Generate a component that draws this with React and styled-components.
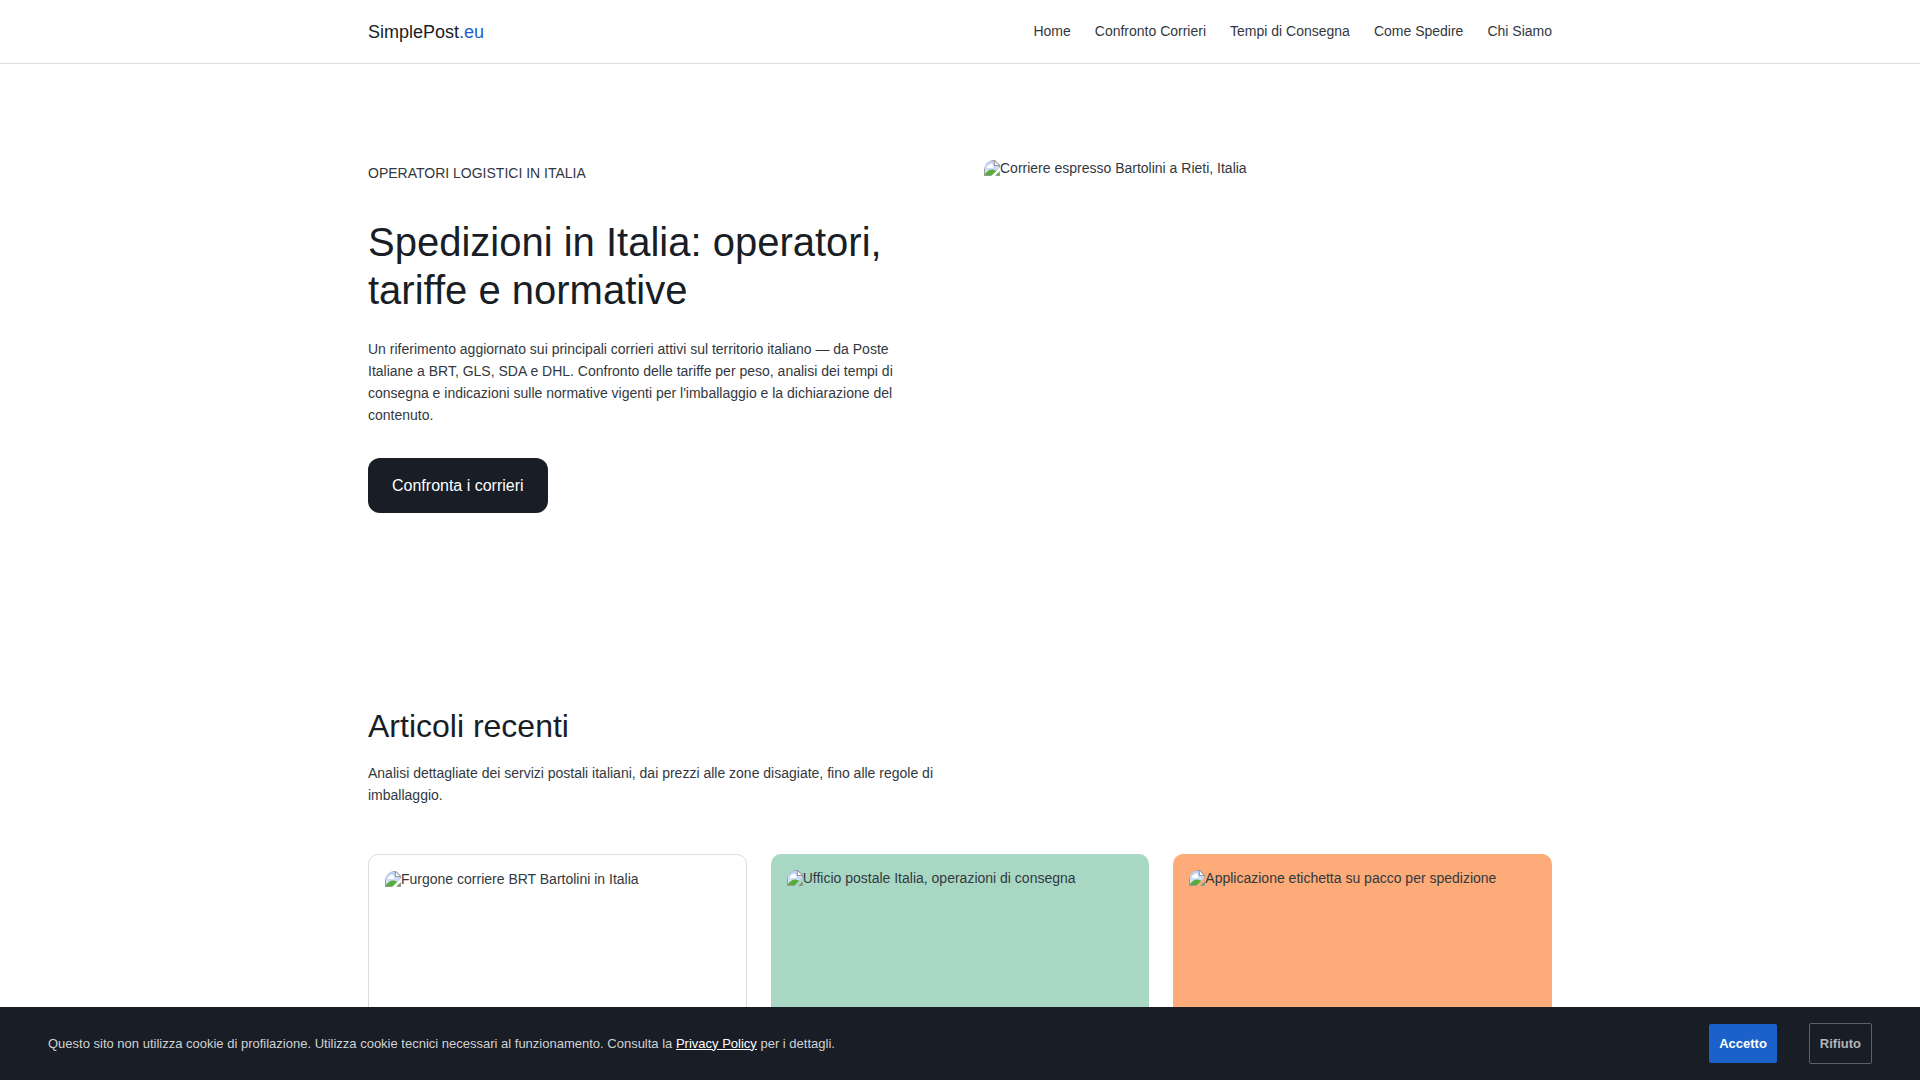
import React, { useId } from 'react';
import styled, { createGlobalStyle } from 'styled-components';

const ink = '#181d26';
const hairline = '#dddddd';
const blue = '#1b61c9';

const GlobalStyle = createGlobalStyle`
  *, *::before, *::after { box-sizing: border-box; }
  body {
    margin: 0;
    background: #ffffff;
    color: #333840;
    font-family: "Liberation Sans", Arial, sans-serif;
    font-size: 14px;
    line-height: 22px;
  }
  h1, h2, p { margin: 0; font-weight: 400; }
  a { color: inherit; text-decoration: none; }
`;

const Container = styled.div`
  width: 100%;
  max-width: 1232px;
  margin: 0 auto;
  padding: 0 24px;
`;

const Header = styled.header`
  border-bottom: 1px solid ${hairline};
`;

const HeaderRow = styled(Container)`
  display: flex;
  align-items: flex-start;
  justify-content: space-between;
  padding-top: 16px;
  padding-bottom: 15px;
`;

const Logo = styled.a`
  font-size: 18px;
  line-height: 32px;
  color: ${ink};
`;

const LogoSuffix = styled.span`
  color: ${blue};
`;

const Nav = styled.nav`
  display: flex;
  gap: 24px;
  line-height: 30px;
`;

const HeroGrid = styled(Container)`
  display: grid;
  grid-template-columns: 1fr 1fr;
  gap: 48px;
  padding-top: 96px;
  padding-bottom: 96px;
`;

const HeroText = styled.div`
  display: flex;
  flex-direction: column;
  align-items: flex-start;
`;

const Eyebrow = styled.p`
  line-height: 26px;
  text-transform: uppercase;
`;

const Title = styled.h1`
  margin: 32px 0 24px;
  font-size: 40px;
  line-height: 48px;
  color: ${ink};
`;

const ButtonLink = styled.a`
  margin-top: 32px;
  padding: 16px 24px;
  border-radius: 12px;
  background: ${ink};
  color: #ffffff;
  font-size: 16px;
  line-height: 23px;
`;

const Figure = styled.div`
  height: ${(p) => p.$height};
  border-radius: 10px;
  overflow: hidden;
  display: flex;
  line-height: 16px;
`;

const Articles = styled(Container)`
  padding-top: 96px;
  padding-bottom: 96px;
`;

const SectionTitle = styled.h2`
  font-size: 32px;
  line-height: 40px;
  color: ${ink};
`;

const Lead = styled.p`
  max-width: 600px;
  margin: 16px 0 48px;
`;

const CardGrid = styled.div`
  display: grid;
  grid-template-columns: repeat(3, 1fr);
  gap: 24px;
`;

const Card = styled.article`
  padding: 16px;
  border: ${(p) => (p.$fill ? 'none' : `1px solid ${hairline}`)};
  border-radius: 10px;
  background: ${(p) => p.$fill || 'transparent'};
`;

const CookieBar = styled.aside`
  position: fixed;
  left: 0;
  right: 0;
  bottom: 0;
  display: flex;
  align-items: center;
  justify-content: space-between;
  padding: 16px 48px;
  background: ${ink};
  color: #d1d2d4;
  font-size: 13px;
`;

const PolicyLink = styled.a`
  color: #ffffff;
  text-decoration: underline;
`;

const Actions = styled.div`
  display: flex;
  align-items: center;
  gap: 32px;
`;

const Action = styled.button`
  padding: 12px 10px;
  border: ${(p) => (p.$outline ? '1px solid #5d6168' : 'none')};
  border-radius: 2px;
  background: ${(p) => (p.$outline ? 'transparent' : blue)};
  color: ${(p) => (p.$outline ? '#b3b4b7' : '#ffffff')};
  font: bold 13px/15px "Liberation Sans", Arial, sans-serif;
  cursor: pointer;
`;

const Icon = styled.svg`
  flex: none;
  width: 16px;
  height: 16px;
`;

function BrokenImage() {
  const id = useId();
  return (
    <Icon viewBox="0 0 16 16" aria-hidden="true">
      <defs>
        <linearGradient id={`${id}sky`} x1="0" y1="0" x2="0" y2="1">
          <stop offset="0" stopColor="#b9cdf5" />
          <stop offset="1" stopColor="#dfe9fc" />
        </linearGradient>
        <clipPath id={`${id}torn`}>
          <path d="M0 0H16V7L7 16H0ZM16 11V16H11Z" />
        </clipPath>
      </defs>
      <g clipPath={`url(#${id}torn)`}>
        <path d="M0 0H11L16 5V16H0Z" fill="#9b9b9b" />
        <path d="M1 1H10V6H15V15H1Z" fill={`url(#${id}sky)`} />
        <path d="M11 1.500L14.500 5H11Z" fill="#ffffff" />
        <path d="M3 7a2 2 0 0 1 2-2 2 2 0 0 1 4 1 1.500 1.500 0 0 1 0 2H3Z" fill="#ffffff" />
        <path d="M1 15V14C3 11 6 9 9 9.500L13 11 15 13V15Z" fill="#57ad3a" />
      </g>
    </Icon>
  );
}

function Picture({ text, height }) {
  return (
    <Figure $height={height}>
      <BrokenImage />
      <span>{text}</span>
    </Figure>
  );
}

const links = ['Home', 'Confronto Corrieri', 'Tempi di Consegna', 'Come Spedire', 'Chi Siamo'];

const cards = [
  { text: 'Furgone corriere BRT Bartolini in Italia' },
  { text: 'Ufficio postale Italia, operazioni di consegna', fill: '#a8d8c4' },
  { text: 'Applicazione etichetta su pacco per spedizione', fill: '#fcab79' },
];

export default function App() {
  return (
    <>
      <GlobalStyle />
      <Header>
        <HeaderRow>
          <Logo href="#">SimplePost<LogoSuffix>.eu</LogoSuffix></Logo>
          <Nav>
            {links.map((label) => <a key={label} href="#">{label}</a>)}
          </Nav>
        </HeaderRow>
      </Header>
      <main>
        <HeroGrid>
          <HeroText>
            <Eyebrow>Operatori logistici in Italia</Eyebrow>
            <Title>Spedizioni in Italia: operatori, tariffe e normative</Title>
            <p>
              Un riferimento aggiornato sui principali corrieri attivi sul territorio italiano — da Poste
              Italiane a BRT, GLS, SDA e DHL. Confronto delle tariffe per peso, analisi dei tempi di
              consegna e indicazioni sulle normative vigenti per l'imballaggio e la dichiarazione del
              contenuto.
            </p>
            <ButtonLink href="#">Confronta i corrieri</ButtonLink>
          </HeroText>
          <Picture text="Corriere espresso Bartolini a Rieti, Italia" height="354px" />
        </HeroGrid>
        <Articles>
          <SectionTitle>Articoli recenti</SectionTitle>
          <Lead>
            Analisi dettagliate dei servizi postali italiani, dai prezzi alle zone disagiate, fino alle
            regole di imballaggio.
          </Lead>
          <CardGrid>
            {cards.map((c) => (
              <Card key={c.text} $fill={c.fill}>
                <Picture text={c.text} height="200px" />
              </Card>
            ))}
          </CardGrid>
        </Articles>
      </main>
      <CookieBar>
        <p>
          Questo sito non utilizza cookie di profilazione. Utilizza cookie tecnici necessari al
          funzionamento. Consulta la <PolicyLink href="#">Privacy Policy</PolicyLink> per i dettagli.
        </p>
        <Actions>
          <Action type="button">Accetto</Action>
          <Action type="button" $outline>Rifiuto</Action>
        </Actions>
      </CookieBar>
    </>
  );
}
